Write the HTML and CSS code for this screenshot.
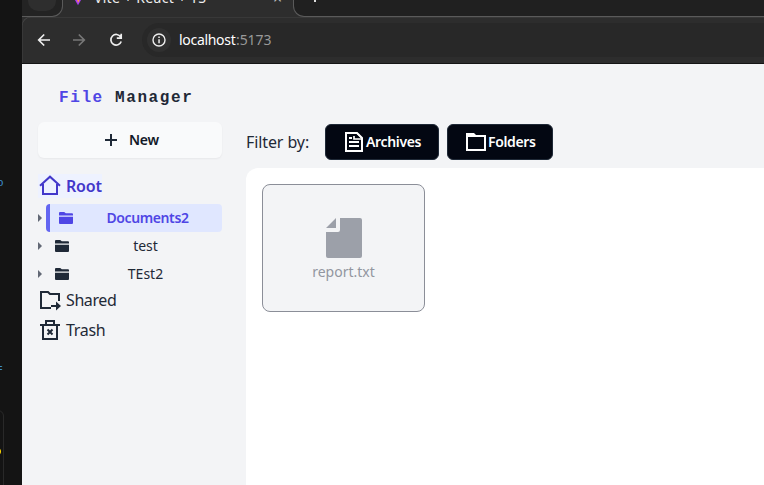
FILE: index.html
```html
<!DOCTYPE html>
<html lang="en">
<head>
<meta charset="utf-8">
<title>File Manager</title>
<link rel="stylesheet" href="styles.css">
</head>
<body>
<div class="desktop">
  <aside class="editor">
    <span class="code-o">o</span><span class="code-eq">=</span><div class="editor-box"><i class="dot"></i></div>
  </aside>
  <div class="browser">
    <div class="tabs">
      <div class="tab-left"><span class="tab-button"></span></div>
      <div class="tab-active">
        <svg class="vite" width="10" height="8" viewBox="0 0 10 8"><path d="M1 0h8L5 7z" fill="#a83cf5"/><path d="M4 0h3L5 4z" fill="#ff9838"/></svg>
        <span class="tab-title">Vite + React + TS</span>
        <span class="tab-close">×</span>
      </div>
      <div class="tab-right"><span class="tab-plus"></span></div>
    </div>
    <div class="toolbar">
      <svg class="back" width="14" height="14" viewBox="0 0 14 14" fill="none" stroke="#eee" stroke-width="1.7"><path d="M13 7H2M7.2 1.5 1.7 7l5.5 5.5"/></svg>
      <svg class="forward" width="14" height="14" viewBox="0 0 14 14" fill="none" stroke="#777" stroke-width="1.7"><path d="M1 7h11M6.800 1.500 12.300 7l-5.500 5.500"/></svg>
      <svg class="reload" width="14" height="14" viewBox="0 0 14 14" fill="none" stroke="#eee" stroke-width="1.700"><path d="M11.700 4A5.300 5.300 0 1 0 12.200 8.500M12.200.8v4.400H7.800"/></svg>
      <div class="address">
        <span class="info"><svg width="14" height="14" viewBox="0 0 14 14"><circle cx="7" cy="7" r="6" fill="none" stroke="#eee" stroke-width="1.400"/><path d="M6.300 6.200h1.500v4H6.300zM6.300 3.500h1.500V5H6.300z" fill="#eee"/></svg></span>
        <span class="host">localhost</span><span class="port">:5173</span>
      </div>
    </div>
    <div class="page">
      <nav class="sidebar">
        <h1><span>File</span> Manager</h1>
        <button class="new"><svg width="12" height="12" viewBox="0 0 12 12"><path d="M6 0v12M0 6h12" stroke="#1f2937" stroke-width="2"/></svg><span>New</span></button>
        <div class="place root"><svg width="24" height="24" viewBox="0 0 24 24" fill="none" stroke="currentColor" stroke-width="2"><path d="M2 11.700 12 2.700l10 9M5 10v10h14V10"/></svg><span>Root</span></div>
        <ul class="tree">
          <li><i class="caret"></i><div class="node selected"><svg width="14" height="12" viewBox="0 0 14 12" fill="currentColor"><path d="M0 3.500V1Q0 0 1 0h4.200l1.600 1.300H13q1 0 1 1v1.200zM0 4.800h14V11q0 1-1 1H1q-1 0-1-1z"/></svg><span class="name docs">Documents2</span></div></li>
          <li><i class="caret"></i><div class="node"><svg width="14" height="12" viewBox="0 0 14 12" fill="currentColor"><path d="M0 3.500V1Q0 0 1 0h4.200l1.600 1.300H13q1 0 1 1v1.200zM0 4.800h14V11q0 1-1 1H1q-1 0-1-1z"/></svg><span class="name">test</span></div></li>
          <li><i class="caret"></i><div class="node"><svg width="14" height="12" viewBox="0 0 14 12" fill="currentColor"><path d="M0 3.500V1Q0 0 1 0h4.200l1.600 1.300H13q1 0 1 1v1.200zM0 4.800h14V11q0 1-1 1H1q-1 0-1-1z"/></svg><span class="name">TEst2</span></div></li>
        </ul>
        <div class="place shared"><svg width="24" height="24" viewBox="0 0 24 24" fill="none" stroke="currentColor" stroke-width="2"><path d="M13 20H3V4h7l2 2h9v7M13 18h6"/><path d="m18 13.500 5 4.500-5 4.500z" fill="currentColor" stroke="none"/></svg><span>Shared</span></div>
        <div class="place trash"><svg width="24" height="24" viewBox="0 0 24 24" fill="none" stroke="currentColor" stroke-width="2"><path d="M2 7h20M5 7v14h14V7M8 7V3h8v4"/><path d="m9.500 11.500 5 5m0-5-5 5"/></svg><span>Trash</span></div>
      </nav>
      <main>
        <div class="filters">
          <span class="label">Filter by:</span>
          <button class="filter archives"><svg width="20" height="20" viewBox="0 0 20 20" fill="none" stroke="#fff" stroke-width="2"><path d="M2 1h11l5 5v13H2zM5 6h3M5 10h10M5 14h10"/><path d="M10 4v3h7" stroke-width="1.700"/><path d="M12 1h1.500L18 5.500V7z" fill="#fff" stroke="none"/></svg><span>Archives</span></button>
          <button class="filter folders"><svg width="20" height="20" viewBox="0 0 20 20"><path fill="#fff" fill-rule="evenodd" d="M0 1h8l2 2h10v16H0zM2 5v12h16V5z"/></svg><span>Folders</span></button>
        </div>
        <section class="files">
          <article class="file"><svg width="36" height="40" viewBox="0 0 36 40" fill="#9ca0a9"><path d="M10 0v10H0zM14 0h20q2 0 2 2v36q0 2-2 2H2q-2 0-2-2V14h12q2 0 2-2z"/></svg><span>report.txt</span></article>
        </section>
      </main>
    </div>
  </div>
</div>
</body>
</html>
```
FILE: styles.css
```css
* { box-sizing: border-box; }
body { margin: 0; overflow: hidden; font-family: "Noto Sans", sans-serif; color: #1f2937; }
svg { display: block; flex: none; }
button { font: inherit; border: 0; padding: 0; color: inherit; }
.desktop { display: flex; width: 764px; height: 485px; background: #141414; }
.editor { width: 22px; flex: none; position: relative; overflow: hidden; font: 11px/14px "Liberation Mono", monospace; color: #3b8ed0; }
.code-o, .code-eq { position: absolute; left: -3px; top: 176px; }
.code-eq { left: -4px; top: 362px; }
.editor-box { position: absolute; left: -10px; top: 410px; width: 14px; height: 90px; border: 1px solid #292929; border-radius: 6px; }
.dot { position: absolute; left: 1px; top: 36px; width: 9px; height: 9px; border-radius: 50%; background: #ffd800; }
.browser { flex: 1; min-width: 0; display: flex; flex-direction: column; background: #2d2d2d; }
.tabs { display: flex; height: 17px; flex: none; }
.tab-left { width: 41px; background: #232323; border: solid #5a5a5a; border-width: 0 1px 1px 0; border-bottom-right-radius: 11px; padding-left: 6px; }
.tab-button { display: block; width: 28px; height: 11px; background: #2e2e2e; border-radius: 0 0 10px 10px; }
.tab-active { width: 230px; display: flex; position: relative; color: #eee; overflow: hidden; }
.vite { margin-left: 10px; width: 10px; height: 6px; }
.tab-title { margin: -12px 0 0 11px; font-size: 14px; line-height: 20px; white-space: nowrap; letter-spacing: .3px; }
.tab-close { position: absolute; left: 210px; top: -13px; font-size: 16px; line-height: 22px; color: #bbb; }
.tab-right { flex: 1; background: #202020; border: solid #5a5a5a; border-width: 0 0 1px 1px; border-bottom-left-radius: 11px; }
.tab-plus { display: block; width: 2px; height: 2px; margin-left: 20px; background: #ddd; }
.toolbar { height: 47px; flex: none; display: flex; align-items: center; padding: 0 0 1px 15px; border-bottom: 1px solid #151515; border-top-left-radius: 8px; box-shadow: inset 1px 1px 0 -0.5px #444; }
.back { margin-right: 21px; }
.forward { margin-right: 23px; }
.reload { margin-right: 19px; }
.address { flex: 1; height: 34px; display: flex; align-items: center; background: #282828; border-radius: 17px 0 0 17px; padding-left: 5px; font-size: 14px; }
.info { width: 24px; height: 24px; display: flex; align-items: center; justify-content: center; background: #303030; border-radius: 50%; margin-right: 8px; }
.host { color: #fff; letter-spacing: -.3px; width: 57px; }
.port { color: #999; letter-spacing: -.1px; }
.page { flex: 1; display: flex; background: #f3f4f6; padding-left: 16px; min-height: 0; }
.sidebar { width: 184px; flex: none; margin-right: 24px; padding-top: 25px; }
h1 { margin: 0 0 15px 21px; font: bold 16px/18px "Liberation Mono", monospace; letter-spacing: 1.6px; white-space: nowrap; }
h1 span { color: #4f46e5; }
.new { width: 184px; height: 36px; background: #f9fafb; border-radius: 6px; box-shadow: 0 1px 2px #0000000d; display: flex; align-items: center; padding-left: 67px; gap: 12px; font-size: 14px; font-weight: 600; letter-spacing: -.3px; color: #111827; }
.new span { padding-bottom: 1px; }
.place { display: flex; align-items: center; gap: 4px; width: max-content; height: 24px; font-size: 16px; line-height: 24px; }
.root { margin-top: 16px; color: #4338ca; background: #eef2ff; font-weight: 600; }
.root span { letter-spacing: -.2px; width: 36px; }
.tree { list-style: none; padding: 0; margin: 6px 0 0; }
.tree li { display: flex; align-items: center; height: 28px; }
.caret { flex: none; width: 4px; height: 8px; border: solid transparent; border-width: 4px 0 4px 4px; border-left-color: #626875; margin-right: 4px; }
.node { flex: 1; height: 28px; display: flex; align-items: center; padding-left: 9px; border-radius: 4px; font-size: 14px; }
.node .name { flex: 1; text-align: center; padding-bottom: 2px; }
.node .docs { letter-spacing: -.4px; }
.selected { border-left: 4px solid #6366f1; background: #e0e7ff; color: #4f46e5; font-weight: 600; }
.shared span { letter-spacing: -.4px; }
.trash { margin-top: 6px; }
.trash span { letter-spacing: -.3px; }
main { flex: 1; display: flex; flex-direction: column; padding-top: 60px; }
.filters { height: 36px; display: flex; align-items: center; gap: 8px; margin-bottom: 8px; }
.label { font-size: 16px; width: 71px; white-space: nowrap; letter-spacing: -.1px; }
.filter { height: 36px; display: flex; align-items: center; background: #030712; color: #fff; border: 1px solid #1f2937; border-radius: 6px; font-size: 14px; font-weight: 600; }
.filter span { padding-bottom: 2px; }
.archives { width: 114px; padding-left: 18px; gap: 2px; letter-spacing: -.35px; }
.folders { width: 106px; padding-left: 18px; gap: 2px; letter-spacing: -.35px; }
.files { flex: 1; background: #fff; border-top-left-radius: 12px; padding: 16px; }
.file { width: 163px; height: 128px; border: 1px solid #8b8e98; border-radius: 8px; background: #f3f4f6; display: flex; flex-direction: column; align-items: center; padding-top: 33px; color: #9296a0; font-size: 14px; line-height: 20px; }
.file span { margin-top: 4px; }
```
